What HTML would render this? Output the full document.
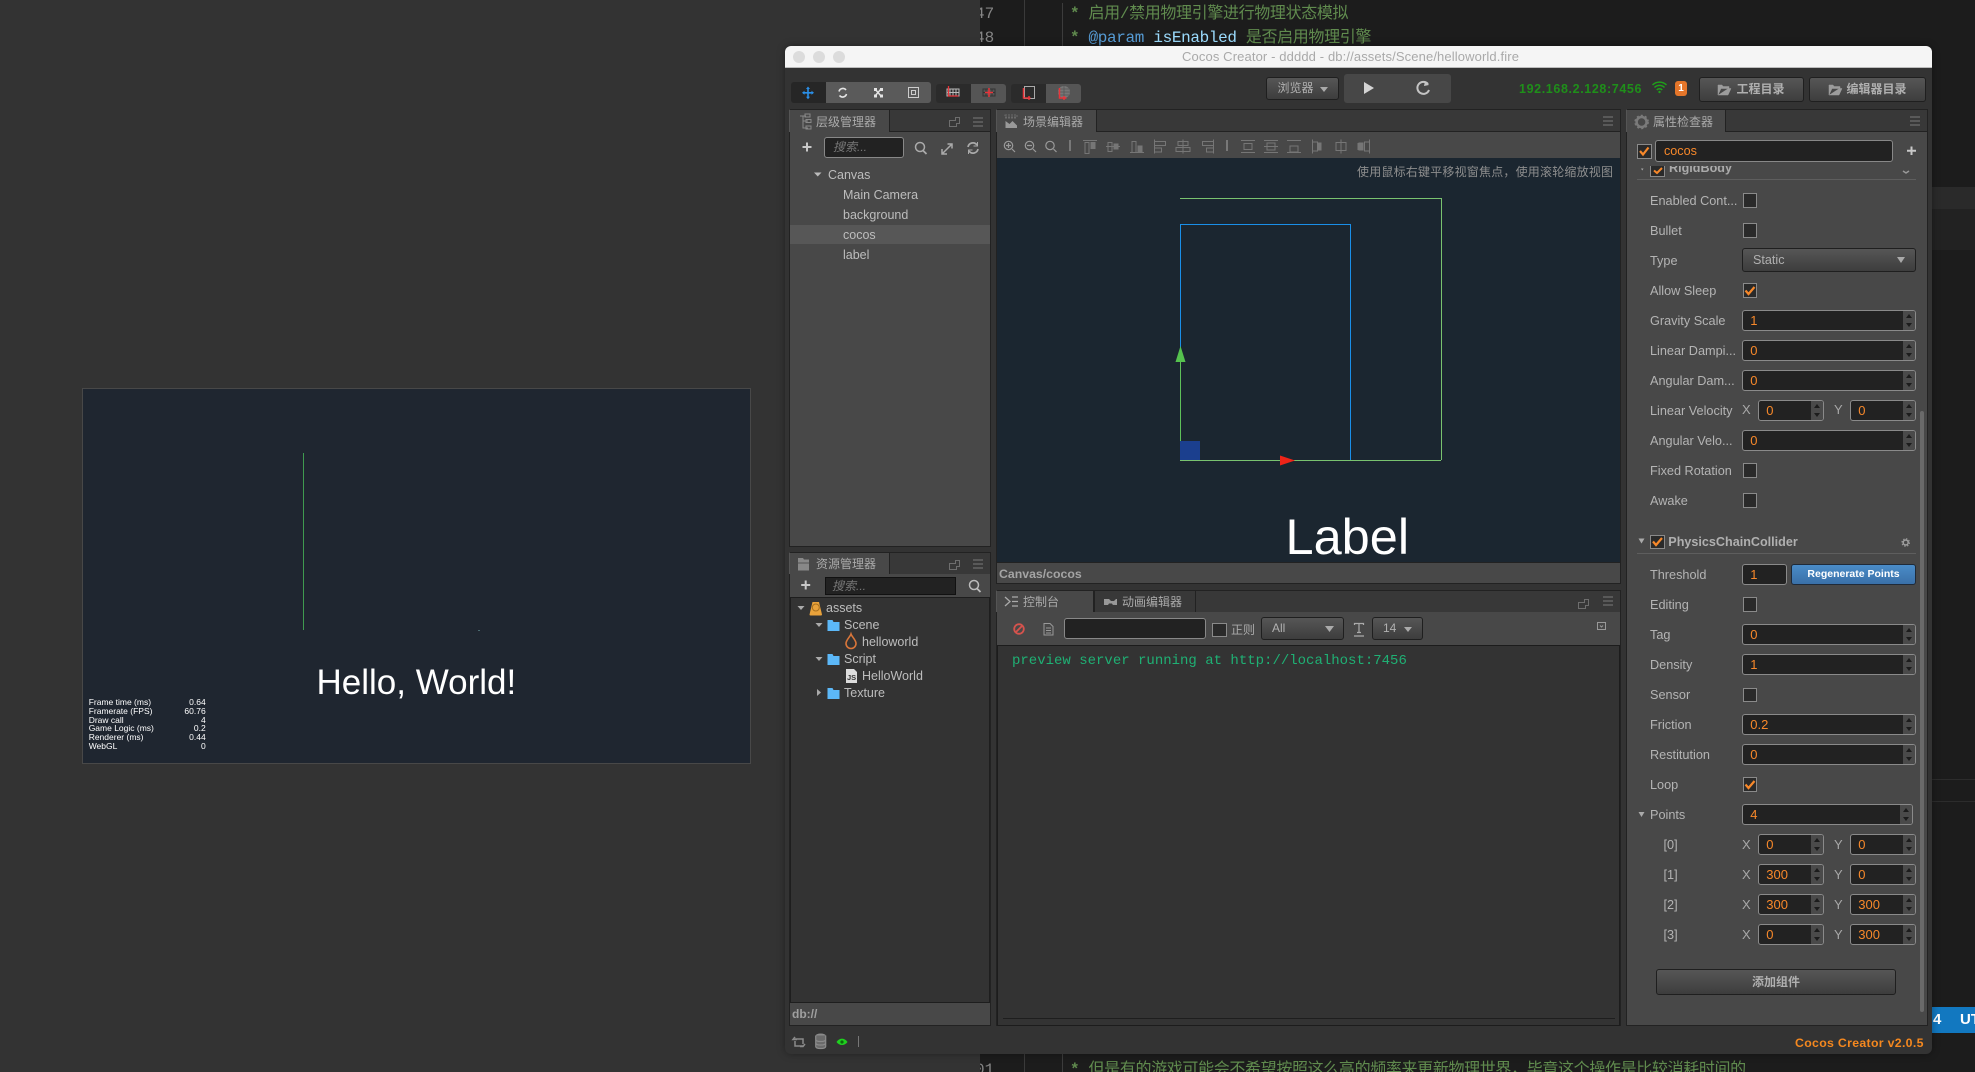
<!DOCTYPE html>
<html><head><meta charset="utf-8"><title>Cocos Creator</title>
<style>
html,body{margin:0;padding:0;width:1975px;height:1072px;overflow:hidden;background:#1c1c1c}
body{position:relative;font-family:"Liberation Sans","Noto Sans CJK SC",sans-serif;font-size:12.6px;color:#b4b4b4}
div{position:absolute;white-space:nowrap}
.b{box-sizing:border-box}
.code{font:16px/20px "Liberation Mono","Noto Sans CJK SC",monospace;color:#608b4e;letter-spacing:-.35px}
.num{font:16px/20px "Liberation Mono",monospace;color:#858585}
.tab{box-sizing:border-box;background:#484848;height:23px;border:1px solid #222;border-bottom:none;border-left-color:#555}
.head{background:#383838;box-sizing:border-box;height:23px;border:1px solid #222;border-bottom:1px solid #222}
.t{color:#aaa;font-size:12px;line-height:16px;height:16px}
.tr{color:#bdbdbd;font-size:12.5px;line-height:16px;height:16px}
.l{color:#b4b4b4;font-size:12.7px;line-height:16px;height:16px;left:1650px}
.in{box-sizing:border-box;height:21px;background:#222;border:1px solid #8a8a8a;border-radius:3px;color:#f7882a;font-size:13px;line-height:20px;padding-left:7px;left:1742.3px;width:173.4px}
.in.s{width:65.4px;left:1758.3px;padding-left:7px}
.in.y{width:65.4px;left:1850.3px;padding-left:7px}
.in i{position:absolute;right:0;top:0;bottom:0;width:12px;background:#4a4a4a;border-radius:0 2px 2px 0}
.in i:before{content:"";position:absolute;left:3px;top:3px;border:3px solid transparent;border-top:0;border-bottom:4px solid #1c1c1c}
.in i:after{content:"";position:absolute;left:3px;bottom:3px;border:3px solid transparent;border-bottom:0;border-top:4px solid #1c1c1c}
.cb{box-sizing:border-box;width:14.5px;height:14.5px;background:#2a2a2a;border:1px solid #8a8a8a;left:1742.5px}
.btn{box-sizing:border-box;border:1px solid #1f1f1f;border-radius:3px;background:linear-gradient(#565656,#3d3d3d);color:#b0b0b0;text-align:center}
.xy{color:#a8a8a8;font-size:13px;line-height:16px;height:16px}
.st{font-size:8.5px;line-height:9px;height:9px;color:#fff;left:88.7px}
.sv{font-size:8.5px;line-height:9px;height:9px;color:#fff;right:1769.3px}
</style></head>
<body>
<!-- desktop background -->
<div style="left:0;top:0;width:980px;height:1072px;background:#333"></div>
<div style="left:1024px;top:0;width:1px;height:46px;background:#3a3a3a"></div>
<div style="left:1062px;top:3px;width:1px;height:43px;background:#3c3c3c"></div>
<div style="left:1024px;top:1054px;width:1px;height:18px;background:#3a3a3a"></div>
<div style="left:1062px;top:1054px;width:1px;height:18px;background:#3c3c3c"></div>
<div style="left:1932px;top:187px;width:43px;height:22px;background:#2a2a2a"></div>
<div style="left:1932px;top:209px;width:43px;height:41px;background:#222"></div>
<div style="left:1932px;top:779px;width:43px;height:1px;background:#2c2c2c"></div>
<div style="left:1932px;top:801px;width:43px;height:1px;background:#2c2c2c"></div>
<div style="left:1932px;top:1007px;width:43px;height:26px;background:#1278c0"></div>
<div style="left:1933px;top:1012px;color:#fff;font:bold 15px/16px 'Liberation Sans',sans-serif">4</div>
<div style="left:1960px;top:1012px;color:#fff;font:bold 15px/16px 'Liberation Sans',sans-serif">UT</div>
<div style="left:980px;top:0;width:44px;height:46px;overflow:hidden"><div class="num" style="left:-5px;top:4px">47</div><div class="num" style="left:-5px;top:28px">48</div></div>
<div style="left:980px;top:1054px;width:44px;height:18px;overflow:hidden"><div class="num" style="left:-5px;top:6px">01</div></div>
<div class="code" style="left:1070px;top:4px"><b>*</b> 启用/禁用物理引擎进行物理状态模拟</div>
<div class="code" style="left:1070px;top:28px"><b>*</b> <span style="color:#569cd6">@param</span> <span style="color:#9cdcfe">isEnabled</span> 是否启用物理引擎</div>
<div class="code" style="left:1070px;top:1060px"><b>*</b> 但是有的游戏可能会不希望按照这么高的频率来更新物理世界，毕竟这个操作是比较消耗时间的</div>

<!-- game preview -->
<div class="b" style="left:82px;top:388px;width:669px;height:376px;background:#1f2630;border:1px solid #484848"></div>
<div style="left:303px;top:453px;width:1px;height:177px;background:#3f9a4f"></div>
<div style="left:478px;top:630px;width:2px;height:1px;background:#4a6a70"></div>
<div style="left:316.500px;top:662px;font-size:35px;line-height:42px;color:#fff">Hello, World!</div>
<div class="st" style="top:698px">Frame time (ms)</div><div class="sv" style="top:698px">0.64</div>
<div class="st" style="top:706.8px">Framerate (FPS)</div><div class="sv" style="top:706.8px">60.76</div>
<div class="st" style="top:715.6px">Draw call</div><div class="sv" style="top:715.6px">4</div>
<div class="st" style="top:724.4px">Game Logic (ms)</div><div class="sv" style="top:724.4px">0.2</div>
<div class="st" style="top:733.2px">Renderer (ms)</div><div class="sv" style="top:733.2px">0.44</div>
<div class="st" style="top:742px">WebGL</div><div class="sv" style="top:742px">0</div>

<!-- window -->
<div style="left:785px;top:46px;width:1147px;height:1008px;background:#333;border-radius:6px;box-shadow:0 0 8px rgba(0,0,0,.35)"></div>
<div class="b" style="left:785px;top:46px;width:1147px;height:22px;background:#f5f5f5;border-radius:6px 6px 0 0;border-bottom:1px solid #bcbcbc"></div>
<div style="left:793px;top:51px;width:12px;height:12px;border-radius:50%;background:#dcdcdc"></div>
<div style="left:813px;top:51px;width:12px;height:12px;border-radius:50%;background:#dcdcdc"></div>
<div style="left:833px;top:51px;width:12px;height:12px;border-radius:50%;background:#dcdcdc"></div>
<div style="left:1182px;top:49px;font-size:13px;line-height:16px;color:#a9a9a9;letter-spacing:.12px">Cocos Creator - ddddd - db://assets/Scene/helloworld.fire</div>

<!-- toolbar -->
<div style="left:791px;top:82px;width:35px;height:21px;background:#262626;border-radius:3px 0 0 3px"></div>
<div style="left:826px;top:82px;width:105px;height:21px;background:#5a5a5a;border-radius:0 3px 3px 0"></div>
<div style="left:936px;top:84px;width:35px;height:19px;background:#2b2b2b;border-radius:3px 0 0 3px"></div>
<div style="left:971px;top:84px;width:35px;height:19px;background:#555;border-radius:0 3px 3px 0"></div>
<div style="left:1011px;top:84px;width:35px;height:19px;background:#2b2b2b;border-radius:3px 0 0 3px"></div>
<div style="left:1046px;top:84px;width:35px;height:19px;background:#555;border-radius:0 3px 3px 0"></div>
<div class="btn" style="left:1266px;top:77px;width:73px;height:23px;font-size:12px;line-height:21px;padding-right:14px">浏览器</div>
<div style="left:1344px;top:74px;width:107px;height:29px;background:#474747;border-radius:3px"></div>
<div style="left:1519px;top:81px;font-weight:bold;font-size:12.5px;line-height:16px;color:#1f8f1a;letter-spacing:.62px">192.168.2.128:7456</div>
<div style="left:1675px;top:81px;width:12px;height:15px;background:#e5762a;border-radius:3px;color:#fff;font:bold 10px/15px 'Liberation Sans',sans-serif;text-align:center">1</div>
<div class="btn" style="left:1699px;top:77px;width:105px;height:25px;font-size:12px;line-height:23px;padding-left:18px;font-weight:bold">工程目录</div>
<div class="btn" style="left:1809px;top:77px;width:117px;height:25px;font-size:12px;line-height:23px;padding-left:18px;font-weight:bold">编辑器目录</div>

<!-- hierarchy panel -->
<div class="head" style="left:789px;top:109px;width:202px"></div>
<div class="tab" style="left:789px;top:109px;width:101px;height:24px"></div>
<div class="b" style="left:789px;top:132px;width:202px;height:415px;background:#484848;border:1px solid #222;border-top:none"></div>
<div class="t" style="left:816px;top:114px">层级管理器</div>
<div class="b" style="left:824px;top:137px;width:80px;height:21px;background:#222;border:1px solid #888;border-radius:3px;color:#777;font-size:12px;font-style:italic;line-height:19px;padding-left:8px">搜索...</div>
<div style="left:790px;top:225px;width:200px;height:19px;background:#575757"></div>
<div style="left:828px;top:167px" class="tr">Canvas</div>
<div style="left:843px;top:187px" class="tr">Main Camera</div>
<div style="left:843px;top:207px" class="tr">background</div>
<div style="left:843px;top:227px" class="tr">cocos</div>
<div style="left:843px;top:247px" class="tr">label</div>

<!-- assets panel -->
<div class="head" style="left:789px;top:552px;width:202px"></div>
<div class="tab" style="left:789px;top:552px;width:101px;height:24px"></div>
<div class="b" style="left:789px;top:574px;width:202px;height:452px;background:#484848;border:1px solid #222;border-top:none"></div>
<div class="t" style="left:816px;top:556px">资源管理器</div>
<div class="b" style="left:825px;top:577px;width:131px;height:18px;background:#222;border:1px solid #111;color:#777;font-size:12px;font-style:italic;line-height:16px;padding-left:6px">搜索...</div>
<div class="b" style="left:790px;top:597px;width:200px;height:406px;background:#333;border:1px solid #1e1e1e"></div>
<div class="tr" style="left:826px;top:600px">assets</div>
<div class="tr" style="left:844px;top:617px">Scene</div>
<div class="tr" style="left:862px;top:634px">helloworld</div>
<div class="tr" style="left:844px;top:651px">Script</div>
<div class="tr" style="left:862px;top:668px">HelloWorld</div>
<div class="tr" style="left:844px;top:685px">Texture</div>
<div style="left:792px;top:1006px;font-weight:bold;font-size:12px;line-height:16px;color:#a0a0a0">db://</div>

<!-- scene panel -->
<div class="head" style="left:996px;top:109px;width:625px"></div>
<div class="tab" style="left:996px;top:109px;width:101px;height:24px"></div>
<div class="b" style="left:996px;top:132px;width:625px;height:452px;background:#484848;border:1px solid #222;border-top:none"></div>
<div class="t" style="left:1023px;top:114px">场景编辑器</div>
<div style="left:997px;top:158px;width:623px;height:404px;background:#1b2630;overflow:hidden">
  <div style="left:288.5px;top:349px;font-size:50.5px;line-height:60px;color:#fff">Label</div>
  <div style="left:183px;top:40px;width:261px;height:1px;background:#79c26f"></div>
  <div style="left:444px;top:40px;width:1px;height:262px;background:#79c26f"></div>
  <div style="left:183px;top:302px;width:261px;height:1px;background:#79c26f"></div>
  <div class="b" style="left:183px;top:66px;width:171px;height:236px;border:1px solid #1a8fe8;border-bottom:none"></div>
  <div style="left:183px;top:196px;width:1px;height:106px;background:#5ec05a"></div>
  <div style="left:183px;top:283px;width:20px;height:19px;background:#1b3f8e"></div>
</div>
<div style="left:997px;top:562px;width:623px;height:1px;background:#222"></div>
<div style="left:999px;top:566px;font-weight:bold;font-size:12.3px;line-height:16px;color:#a4a4a4">Canvas/cocos</div>
<div style="left:1357px;top:164px;font-size:12px;line-height:16px;color:#8e8e8e;letter-spacing:.2px">使用鼠标右键平移视窗焦点，使用滚轮缩放视图</div>

<!-- console panel -->
<div class="head" style="left:996px;top:590px;width:625px"></div>
<div class="tab" style="left:996px;top:590px;width:98px;height:24px"></div>
<div class="b" style="left:1094px;top:590px;width:102px;height:23px;background:#383838;border:1px solid #222"></div>
<div class="b" style="left:996px;top:612px;width:625px;height:414px;background:#484848;border:1px solid #222;border-top:none"></div>
<div class="t" style="left:1023px;top:594px">控制台</div>
<div class="t" style="left:1122px;top:594px">动画编辑器</div>
<div class="b" style="left:1063.5px;top:618px;width:142px;height:21px;background:#222;border:1px solid #888;border-radius:3px"></div>
<div class="cb" style="left:1212px;top:622.5px"></div>
<div class="t" style="left:1231px;top:622px">正则</div>
<div class="btn" style="left:1261px;top:617px;width:82.5px;height:23px;font-size:12px;line-height:21px;text-align:left;padding-left:10px">All</div>
<div class="btn" style="left:1372px;top:617px;width:51px;height:23px;font-size:12px;line-height:21px;text-align:left;padding-left:10px">14</div>
<div class="b" style="left:997px;top:645px;width:623px;height:381px;background:#333;border:1px solid #1c1c1c"></div>
<div style="left:1003px;top:1018px;width:612px;height:1px;background:#1e1e1e"></div>
<div style="left:1012px;top:652px;font:14px/18px 'Liberation Mono',monospace;color:#1fb074">preview server running at http://localhost:7456</div>

<!-- inspector panel -->
<div class="head" style="left:1626px;top:109px;width:302px"></div>
<div class="tab" style="left:1626px;top:109px;width:100px;height:24px"></div>
<div class="b" style="left:1626px;top:132px;width:302px;height:894px;background:#484848;border:1px solid #222;border-top:none"></div>
<div class="t" style="left:1653px;top:114px">属性检查器</div>
<div class="cb" style="left:1637px;top:144px"></div>
<div class="b" style="left:1655px;top:140px;width:238px;height:22px;background:#222;border:1px solid #888;border-radius:3px;color:#f7882a;font-size:12.6px;line-height:20px;padding-left:8px">cocos</div>
<div style="left:1637px;top:166px;width:279px;height:13px;overflow:hidden">
  <div style="left:32px;top:-6px;font-weight:bold;font-size:12.6px;line-height:16px;color:#aaa">RigidBody</div>
  <div class="cb" style="left:13px;top:-4px"></div>
</div>
<div style="left:1637px;top:179px;width:279px;height:1px;background:#5e5e5e"></div>

<div class="l" style="top:193px">Enabled Cont...</div><div class="cb" style="top:193px"></div>
<div class="l" style="top:223px">Bullet</div><div class="cb" style="top:223px"></div>
<div class="l" style="top:253px">Type</div>
<div class="btn" style="left:1742px;top:248px;width:174px;height:24px;font-size:12.6px;line-height:22px;text-align:left;padding-left:10px">Static</div>
<div class="l" style="top:283px">Allow Sleep</div><div class="cb" style="top:283px"></div>
<div class="l" style="top:312.5px">Gravity Scale</div><div class="in" style="top:310px">1<i></i></div>
<div class="l" style="top:343px">Linear Dampi...</div><div class="in" style="top:340px">0<i></i></div>
<div class="l" style="top:373px">Angular Dam...</div><div class="in" style="top:370px">0<i></i></div>
<div class="l" style="top:403px">Linear Velocity</div>
<div class="xy" style="left:1742px;top:402px">X</div><div class="in s" style="top:400px">0<i></i></div>
<div class="xy" style="left:1834px;top:402px">Y</div><div class="in y" style="top:400px">0<i></i></div>
<div class="l" style="top:433px">Angular Velo...</div><div class="in" style="top:430px">0<i></i></div>
<div class="l" style="top:463px">Fixed Rotation</div><div class="cb" style="top:463px"></div>
<div class="l" style="top:492.5px">Awake</div><div class="cb" style="top:493px"></div>

<div class="cb" style="left:1650px;top:534.5px"></div>
<div style="left:1668.3px;top:534px;font-weight:bold;font-size:12.6px;line-height:16px;color:#b0b0b0">PhysicsChainCollider</div>
<div style="left:1637px;top:553px;width:279px;height:1px;background:#5e5e5e"></div>

<div class="l" style="top:566.5px">Threshold</div><div class="in" style="top:563.5px;width:45px">1</div>
<div class="b" style="left:1791.3px;top:563.5px;width:124.4px;height:21px;border:1px solid #1f2a38;border-radius:3px;background:linear-gradient(#4a8cc8,#3a70a8);color:#fff;font-weight:bold;font-size:10.5px;line-height:19px;text-align:center">Regenerate Points</div>
<div class="l" style="top:596.5px">Editing</div><div class="cb" style="top:597px"></div>
<div class="l" style="top:627px">Tag</div><div class="in" style="top:624px">0<i></i></div>
<div class="l" style="top:657px">Density</div><div class="in" style="top:654px">1<i></i></div>
<div class="l" style="top:687px">Sensor</div><div class="cb" style="top:687.5px"></div>
<div class="l" style="top:716.5px">Friction</div><div class="in" style="top:713.5px">0.2<i></i></div>
<div class="l" style="top:747px">Restitution</div><div class="in" style="top:743.5px">0<i></i></div>
<div class="l" style="top:776.5px">Loop</div><div class="cb" style="top:777px"></div>
<div class="l" style="top:807px">Points</div><div class="in" style="top:803.5px;width:170.4px">4<i></i></div>

<div class="l" style="left:1663.5px;top:836.5px">[0]</div>
<div class="xy" style="left:1742px;top:836.5px">X</div><div class="in s" style="top:833.5px">0<i></i></div>
<div class="xy" style="left:1834px;top:836.5px">Y</div><div class="in y" style="top:833.5px">0<i></i></div>
<div class="l" style="left:1663.5px;top:866.5px">[1]</div>
<div class="xy" style="left:1742px;top:866.5px">X</div><div class="in s" style="top:863.5px">300<i></i></div>
<div class="xy" style="left:1834px;top:866.5px">Y</div><div class="in y" style="top:863.5px">0<i></i></div>
<div class="l" style="left:1663.5px;top:896.5px">[2]</div>
<div class="xy" style="left:1742px;top:896.5px">X</div><div class="in s" style="top:893.5px">300<i></i></div>
<div class="xy" style="left:1834px;top:896.5px">Y</div><div class="in y" style="top:893.5px">300<i></i></div>
<div class="l" style="left:1663.5px;top:926.5px">[3]</div>
<div class="xy" style="left:1742px;top:926.5px">X</div><div class="in s" style="top:923.5px">0<i></i></div>
<div class="xy" style="left:1834px;top:926.5px">Y</div><div class="in y" style="top:923.5px">300<i></i></div>

<div class="btn" style="left:1656px;top:969px;width:240px;height:26px;font-size:12px;line-height:24px;font-weight:bold">添加组件</div>
<div style="left:1920px;top:411px;width:3.5px;height:601px;background:#6a6a6a;border-radius:2px"></div>

<div style="left:1795px;top:1035px;font-weight:bold;font-size:12.3px;line-height:16px;color:#f5881f;letter-spacing:.32px">Cocos Creator v2.0.5</div>

<!-- icons -->
<svg width="1975" height="1072" viewBox="0 0 1975 1072" style="position:absolute;left:0;top:0" fill="none">
  <!-- transform toolbar -->
  <path d="M808 88v10M803 92.800h10" stroke="#2a8fe8" stroke-width="1.600"/>
  <path d="M808 86.500l-2 2.500h4zM808 99.200l-2-2.500h4zM802 92.800l2.500-2v4zM814 92.800l-2.500-2v4z" fill="#2a8fe8"/>
  <path d="M839 91.500a4 4 0 0 1 7-1.500M846.500 94a4 4 0 0 1-7 1.500" stroke="#e4e4e4" stroke-width="1.600"/>
  <path d="M875 89l6 7M881 89l-6 7" stroke="#e4e4e4" stroke-width="1.500"/><path d="M874 88h3v3h-3zM880 88h3v3h-3zM874 94.500h3v3h-3zM880 94.500h3v3h-3z" fill="#e4e4e4"/>
  <rect x="908.500" y="87.500" width="10" height="10" stroke="#ccc"/><rect x="911.500" y="90.500" width="4" height="4" stroke="#ccc"/>
  <path d="M947 89h12v7h-12zM950 89v7M953 89v7M956 89v7M947 92.500h12" stroke="#bbb"/><path d="M948.500 86v10h10" stroke="#e8343a" stroke-width="1.300"/>
  <path d="M983 89h12v7h-12zM986 89v7M989 89v7M992 89v7M983 92.500h12" stroke="#333"/><path d="M989 88v9M985 92.500h8" stroke="#e8343a" stroke-width="1.500"/>
  <rect x="1024.500" y="86.500" width="10" height="12" stroke="#aaa"/><path d="M1023.500 88v10h7M1029 96v4" stroke="#e8343a" stroke-width="1.500"/>
  <circle cx="1064" cy="92" r="6" fill="#777"/><path d="M1058 92h12M1064 86v12M1059 89h10M1059 95h10" stroke="#555" stroke-width=".8"/><path d="M1059.500 88v10h7M1064 96v4" stroke="#e8343a" stroke-width="1.500"/>
  <path d="M1320 87l4 5 4-5z" fill="#aaa"/>
  <path d="M1364 82v12l10-6z" fill="#d4d4d4"/>
  <path d="M1428 84a6 6 0 1 0 1 6" stroke="#c4c4c4" stroke-width="2"/><path d="M1425 81l4 4-5 1z" fill="#c4c4c4"/>
  <path d="M1652.500 85a10 10 0 0 1 14 0M1654.500 87.500a7 7 0 0 1 10 0M1656.800 90a3.500 3.500 0 0 1 5.400 0" stroke="#1f9f1a" stroke-width="1.500"/><circle cx="1659.500" cy="92" r="1.200" fill="#1f9f1a"/>
  <path d="M1718 95v-10h4l1 1.500h6v2h-8l-3 6.500h10l3-6.500h-3" fill="#9c9c9c" stroke="#9c9c9c" stroke-width=".5"/>
  <path d="M1829 95v-10h4l1 1.500h6v2h-8l-3 6.500h10l3-6.500h-3" fill="#9c9c9c" stroke="#9c9c9c" stroke-width=".5"/>
  <!-- tab icons hierarchy -->
  <path d="M800 116h6M803 116v12h5M803 121h5M805 114h5v3h-5zM806 119.500h5v3h-5zM806 126h5v3h-5z" stroke="#888"/>
  <path d="M949.500 120.500h6v-3h4v6h-3v3h-7z" stroke="#6e6e6e"/>
  <path d="M973 118h10M973 122h10M973 126h10" stroke="#7a7a7a"/>
  <path d="M807 142.500v9M802.500 147h9" stroke="#c8c8c8" stroke-width="2"/>
  <circle cx="920" cy="147" r="4.500" stroke="#aaa" stroke-width="1.500"/><path d="M923 150.500l3.500 3.500" stroke="#aaa" stroke-width="1.800"/>
  <path d="M942.500 153.500l9-9M947.500 144h4.500v4.500M942 149v5h5" stroke="#aaa" stroke-width="1.500"/>
  <path d="M968 147a5 5 0 0 1 9-2M978 149a5 5 0 0 1-9 2" stroke="#aaa" stroke-width="1.700"/><path d="M977.500 142v4h-4M968.500 154v-4h4" stroke="#aaa"/>
  <path d="M814 172.500h7.500l-3.750 4z" fill="#bbb"/>
  <!-- assets -->
  <path d="M798 558h5l1 1.500h5v11h-11z" fill="#888"/><path d="M798 563h11" stroke="#555"/>
  <path d="M949.500 563.500h6v-3h4v6h-3v3h-7z" stroke="#6e6e6e"/>
  <path d="M973 560h10M973 564h10M973 568h10" stroke="#7a7a7a"/>
  <path d="M805.700 580.500v9M801.200 585h9" stroke="#c8c8c8" stroke-width="2"/>
  <circle cx="974" cy="585" r="4.500" stroke="#bbb" stroke-width="1.500"/><path d="M977 588.500l3.500 3.500" stroke="#bbb" stroke-width="1.800"/>
  <path d="M797.500 606h7l-3.500 4z" fill="#aaa"/>
  <path d="M812.500 602h6.500l3 12.500a1 1 0 0 1-1 1h-10.500a1 1 0 0 1-1-1z" fill="#e9a23b"/><circle cx="815.800" cy="607.500" r="3.500" stroke="#a8701e"/>
  <path d="M815.500 623h7l-3.500 4z" fill="#aaa"/><path d="M815.500 657h7l-3.500 4z" fill="#aaa"/><path d="M817 689l4 3.500-4 3.500z" fill="#aaa"/>
  <path d="M827.500 620h5l1 2h6v9h-12z" fill="#5cb8f8"/><path d="M827.500 654h5l1 2h6v9h-12z" fill="#5cb8f8"/><path d="M827.500 688h5l1 2h6v9h-12z" fill="#5cb8f8"/>
  <path d="M851 634c-1 3-5 6-5 9.500a5 5 0 0 0 10 0c0-3.500-4-6.500-5-9.500z" stroke="#d9763a" stroke-width="1.600"/>
  <path d="M846 669h8l3 3v11h-11z" fill="#ddd"/><text x="847" y="680" font-family="Liberation Sans" font-weight="bold" font-size="7.500" fill="#333">JS</text>
  <!-- scene -->
  <path d="M1005.500 128v-7l4 3 3-3 4.500 4.500v2.500z" fill="#999"/><path d="M1005 115h12v2h-12zM1005 118h12" stroke="#6a6a6a" stroke-dasharray="2 1"/>
  <path d="M1603 117h10M1603 121h10M1603 125h10" stroke="#7a7a7a"/>
  <g stroke="#9a9a9a" stroke-width="1.200">
   <circle cx="1008.500" cy="145.500" r="4.200"/><path d="M1012 149l3 3M1006 145.500h5M1008.500 143v5"/>
   <circle cx="1029.500" cy="145.500" r="4.200"/><path d="M1033 149l3 3M1027 145.500h5"/>
   <circle cx="1050" cy="145.500" r="4.200"/><path d="M1053.500 149l3 3"/>
   <path d="M1070 140v11"/><path d="M1227 140v11"/>
  </g>
  <g stroke="#767676" stroke-width="1">
   <path d="M1083 140.500h14M1085 142.500h4v11h-4z"/><rect x="1091" y="142.500" width="4" height="6" fill="#767676"/>
   <path d="M1106 146.500h14M1108 142.500h4v9h-4z"/><rect x="1114" y="144" width="4" height="5" fill="#767676"/>
   <path d="M1130 152.500h14M1132 141.500h4v11h-4z"/><rect x="1138" y="146" width="4" height="6" fill="#767676"/>
   <path d="M1154.500 139.500v14M1154.500 141.500h11v4h-11zM1154.500 148h7v4h-7z"/>
   <path d="M1183 139.500v14M1178 141.500h10v4h-10zM1176 147.500h14v4h-14z"/>
   <path d="M1213.500 139.500v14M1202.500 141.500h11v4h-11zM1206.500 148h7v4h-7z"/>
   <path d="M1241 140.500h14M1241 152.500h14M1244 143.500h8v6h-8z"/>
   <path d="M1264 140.500h14M1264 146.500h14M1264 152.500h14M1267 143h8v7h-8z"/>
   <path d="M1287 140.500h14M1287 152.500h14M1290 146h8v6h-8z"/>
   <path d="M1312.500 139.500v14M1312.500 142h5v9h-5zM1321 143v7"/><rect x="1318" y="143" width="3" height="7" fill="#767676"/>
   <path d="M1341 139.500v14M1336 142.500h5v8h-5zM1341 142.500h5v8h-5z"/>
   <path d="M1369.500 139.500v14M1364.500 142h5v9h-5zM1358 143v7"/><rect x="1359" y="143" width="4" height="7" fill="#767676"/>
  </g>
  <!-- gizmo arrows -->
  <path d="M1180.500 346l-5 16h10z" fill="#55c24e"/>
  <path d="M1295 460.500l-15-5v10z" fill="#ee2418"/>
  <!-- console -->
  <path d="M1005 597l5 4.500-5 4.500M1012 597h6M1012 601.500h6M1012 606h6" stroke="#aaa" stroke-width="1.300"/>
  <path d="M1104 599h5l2 2h3l2-2h1v6h-2l-1-1.500h-5l-1 1.500h-4z" fill="#999"/><circle cx="1106" cy="603" r="2" fill="#999"/><circle cx="1114" cy="603" r="2" fill="#999"/>
  <path d="M1578.500 602.500h6v-3h4v6h-3v3h-7z" stroke="#6e6e6e"/>
  <path d="M1603 597h10M1603 601h10M1603 605h10" stroke="#7a7a7a"/>
  <circle cx="1019" cy="629" r="4.800" stroke="#d5534d" stroke-width="1.800"/><path d="M1015.500 632.500l7-7" stroke="#d5534d" stroke-width="1.800"/>
  <path d="M1044 623.500h6l3 3v8.500h-9zM1046 628h5M1046 630.500h5M1046 633h5" stroke="#999"/>
  <path d="M1325 626h9l-4.500 6z" fill="#aaa"/>
  <path d="M1354.500 625v-1.500h9v1.500M1359 623.500v9M1357 632.500h4M1354 636h10" stroke="#aaa" stroke-width="1.200"/>
  <path d="M1404 627h8l-4 5z" fill="#aaa"/>
  <rect x="1597.500" y="622.500" width="8" height="7" stroke="#999"/><path d="M1600 625.500l1.500 1.500 1.500-1.500" stroke="#999"/>
  <!-- inspector -->
  <circle cx="1641.600" cy="122" r="5" stroke="#7a7a7a" stroke-width="2.500"/><circle cx="1641.600" cy="122" r="6.300" stroke="#7a7a7a" stroke-dasharray="2 2.100" stroke-width="2"/>
  <path d="M1910 117h10M1910 121h10M1910 125h10" stroke="#7a7a7a"/>
  <path d="M1911.500 146.500v8.500M1907 150.700h9" stroke="#c8c8c8" stroke-width="2"/>
  <path d="M1640 151l3 3.500 5.500-7" stroke="#f7882a" stroke-width="2.200"/>
  <path d="M1745.500 290.500l3 3.500 6-7" stroke="#f7882a" stroke-width="2.200"/>
  <path d="M1745.500 784.500l3 3.500 6-7" stroke="#f7882a" stroke-width="2.200"/>
  <path d="M1653 541.500l3 3.500 6-7" stroke="#f7882a" stroke-width="2.200"/>
  <path d="M1654 170.500l3 2.500 5-5" stroke="#f7882a" stroke-width="2"/>
  <path d="M1641 168.500h2.500l-1.250 2z" fill="#aaa"/>
  <path d="M1897 257h8l-4 6z" fill="#aaa"/>
  <path d="M1638.500 538.500h6l-3 5z" fill="#aaa"/><path d="M1638.500 812h6l-3 5z" fill="#aaa"/>
  <circle cx="1905.700" cy="542.500" r="2.500" stroke="#a0a0a0" stroke-width="1.500"/><circle cx="1905.700" cy="542.500" r="3.800" stroke="#a0a0a0" stroke-dasharray="1.500 1.500"/>
  <path d="M1903 171l3 2 3-2" stroke="#999" stroke-width="1.500"/>
  <!-- status bar -->
  <path d="M795 1039h8v5M795 1037l-2 2.500h4M805 1044l-2 2.500h-3M803 1046h-8v-5" stroke="#8a8a8a" stroke-width="1.500"/>
  <ellipse cx="820.700" cy="1035.500" rx="5" ry="2" fill="#8a8a8a"/><path d="M815.700 1035.500v11c0 2.700 10 2.700 10 0v-11M815.700 1039.500c0 2.700 10 2.700 10 0M815.700 1043c0 2.700 10 2.700 10 0" stroke="#8a8a8a" stroke-width="1.200" fill="#6a6a6a"/>
  <path d="M836.500 1042c3-4.500 8-4.500 11 0-3 4-8 4-11 0z" fill="#1fd01f"/><circle cx="842" cy="1042" r="1.600" fill="#0a6a0a"/>
  <path d="M858.500 1036v11" stroke="#777"/>
</svg>
</body></html>
